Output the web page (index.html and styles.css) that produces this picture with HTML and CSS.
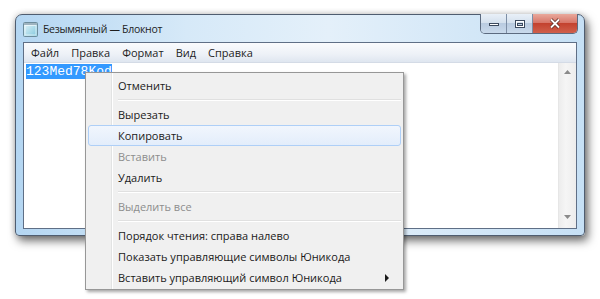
FILE: index.html
```html
<!DOCTYPE html>
<html lang="ru">

<head>
  <meta charset="UTF-8">
  <title>Безымянный — Блокнот</title>
  <link rel="stylesheet" href="styles.css">
</head>

<body>
  <div class="stage">
    <div class="window">
      <div class="titlebar">
        <svg class="appIcon" width="15" height="15" viewBox="0 0 15 15">
          <defs>
            <linearGradient id="pad" x1="0" y1="0" x2="1" y2="1">
              <stop offset="0" stop-color="#e8f6fb" />
              <stop offset="1" stop-color="#7fc6dc" />
            </linearGradient>
          </defs>
          <rect x="0.5" y="0.5" width="14" height="14" rx="1" fill="url(#pad)" stroke="#6d8c9c" />
          <rect x="1" y="1" width="13" height="2" fill="#9fb4c0" />
          <rect x="2" y="3.5" width="11" height="9.5" fill="none" stroke="#ffffff" stroke-opacity="0.6" />
        </svg>
        <span class="title">Безымянный — Блокнот</span>
        <div class="captionBtns">
          <div class="capBtn minBtn">
            <svg width="12" height="6" viewBox="0 0 12 6"><rect x="1.5" y="2.5" width="9" height="2" fill="#fff" stroke="#3c4a5e" /></svg>
          </div>
          <div class="capBtn maxBtn">
            <svg width="12" height="10" viewBox="0 0 12 10"><rect x="1.5" y="1.5" width="9" height="7" fill="none" stroke="#3c4a5e" /><rect x="2.5" y="2.5" width="7" height="5" fill="none" stroke="#fff" /><rect x="3.5" y="4.5" width="5" height="2" fill="none" stroke="#3c4a5e" /></svg>
          </div>
          <div class="capBtn closeBtn">
            <svg width="12" height="11" viewBox="0 0 12 11"><path d="M2 1.5 L10 9.5 M10 1.5 L2 9.5" stroke="#5a2a22" stroke-width="3.4" /><path d="M2 1.5 L10 9.5 M10 1.5 L2 9.5" stroke="#fff" stroke-width="1.8" /></svg>
          </div>
        </div>
      </div>

      <div class="client">
        <div class="menubar">
          <span class="menuItem">Файл</span>
          <span class="menuItem">Правка</span>
          <span class="menuItem">Формат</span>
          <span class="menuItem">Вид</span>
          <span class="menuItem">Справка</span>
        </div>
        <div class="editArea">
          <div class="editText"><span class="selected">123Med78Kod</span></div>
          <div class="scrollbar">
            <svg class="arrow" width="7" height="4" viewBox="0 0 7 4"><path d="M0 4 L3.5 0 L7 4 Z" fill="#8a8a8a" /></svg>
            <svg class="arrow" width="7" height="4" viewBox="0 0 7 4"><path d="M0 0 L3.5 4 L7 0 Z" fill="#8a8a8a" /></svg>
          </div>
        </div>
      </div>
    </div>

    <div class="contextMenu">
      <div class="cmItem">Отменить</div>
      <div class="cmSep"></div>
      <div class="cmItem">Вырезать</div>
      <div class="cmItem hover">Копировать</div>
      <div class="cmItem disabled">Вставить</div>
      <div class="cmItem">Удалить</div>
      <div class="cmSep"></div>
      <div class="cmItem disabled">Выделить все</div>
      <div class="cmSep"></div>
      <div class="cmItem">Порядок чтения: справа налево</div>
      <div class="cmItem">Показать управляющие символы Юникода</div>
      <div class="cmItem sub">Вставить управляющий символ Юникода</div>
    </div>
  </div>
</body>

</html>
```

FILE: styles.css
```css
body {
  margin: 0;
  background: #fff;
  font-family: "Open Sans", "Noto Sans", sans-serif;
  font-size: 11px;
  color: #1a1a1a;
}

.stage {
  position: relative;
  width: 600px;
  height: 299px;
  padding: 14px 0 0 15px;
  box-sizing: border-box;
}

.window {
  width: 570px;
  height: 222px;
  box-sizing: border-box;
  border: 1px solid #4f5d70;
  border-radius: 7px 7px 4px 4px;
  background: linear-gradient(to right, #b4d6f2 0%, #d6e9f8 30%, #e4f0fa 55%, #c6e0f5 100%);
  box-shadow: 3px 5px 10px rgba(0, 0, 0, 0.55), 0 0 6px rgba(0, 0, 0, 0.2);
  padding: 0 7px 6px 7px;
  display: flex;
  flex-direction: column;
}

.titlebar {
  height: 27px;
  display: flex;
  align-items: center;
  position: relative;
}

.appIcon {
  margin: 2px 5px 0 0;
}

.title {
  color: #1e1e1e;
  margin-top: 1px;
  font-size: 10.5px;
  letter-spacing: -0.3px;
}

.captionBtns {
  position: absolute;
  top: -1px;
  right: -1px;
  display: flex;
  height: 19px;
  border: 1px solid #5c6b80;
  border-top: none;
  border-radius: 0 0 5px 5px;
  overflow: hidden;
}

.capBtn {
  display: flex;
  justify-content: center;
  align-items: center;
}

.minBtn,
.maxBtn {
  width: 25px;
  background: linear-gradient(to bottom, #e9f0f8 0%, #d5e1ee 45%, #b9cbe0 50%, #c9daec 100%);
  border-right: 1px solid #7d8ea5;
}

.closeBtn {
  width: 44px;
  background: linear-gradient(to bottom, #e9a99c 0%, #d8776a 45%, #c3422f 50%, #d0604c 100%);
}

.client {
  flex: 1;
  border: 1px solid #5f6f86;
  background: #fff;
  display: flex;
  flex-direction: column;
}

.menubar {
  height: 19px;
  background: linear-gradient(to bottom, #fafbfd 0%, #edf1f7 60%, #dfe6f0 100%);
  border-bottom: 1px solid #d4dbe6;
  display: flex;
  align-items: center;
  padding-left: 1px;
}

.menuItem {
  padding: 0 6px;
  color: #1e1e1e;
}

.editArea {
  flex: 1;
  display: flex;
}

.editText {
  flex: 1;
  padding: 2px 0 0 2px;
  font-family: "Liberation Mono", monospace;
  font-size: 13px;
  line-height: 13px;
}

.selected {
  background: #3399ff;
  color: #fff;
}

.scrollbar {
  width: 17px;
  background: linear-gradient(to right, #ececec, #f5f5f5 40%, #ececec);
  border-left: 1px solid #e6e6e6;
  display: flex;
  flex-direction: column;
  justify-content: space-between;
  align-items: center;
  padding: 7px 0 9px 0;
}

.contextMenu {
  position: absolute;
  left: 85px;
  top: 72px;
  width: 313px;
  border: 1px solid #979797;
  background: #f0f0f0;
  padding: 2px 2px 1px 2px;
  box-shadow: 2px 2px 3px rgba(0, 0, 0, 0.35);
  background-image: linear-gradient(to right, transparent 25px, #e2e3e3 25px, #e2e3e3 26px, #fff 26px, #fff 27px, transparent 27px);
}

.cmItem {
  height: 21px;
  box-sizing: border-box;
  line-height: 19px;
  padding-left: 29px;
  border: 1px solid transparent;
  border-radius: 3px;
  position: relative;
}

.cmItem.hover {
  background: linear-gradient(to bottom, #f1f6fd, #e3edfb);
  border-color: #aecff7;
}

.cmItem.disabled {
  color: #8d8d8d;
}

.cmItem.sub::after {
  content: "";
  position: absolute;
  right: 11px;
  top: 6px;
  border-left: 4px solid #1a1a1a;
  border-top: 4px solid transparent;
  border-bottom: 4px solid transparent;
}

.cmSep {
  height: 8px;
  margin-left: 30px;
  background: linear-gradient(to bottom, transparent 3px, #e0e0e0 3px, #e0e0e0 4px, #fff 4px, #fff 5px, transparent 5px);
}
```
